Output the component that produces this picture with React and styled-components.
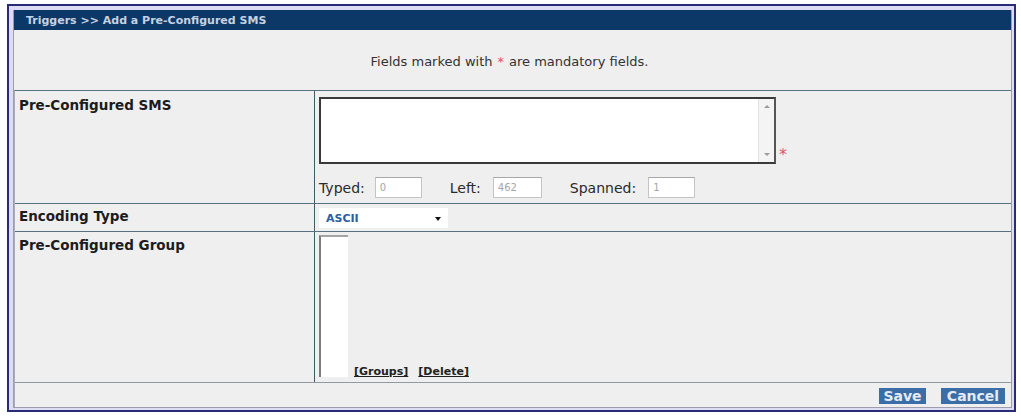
import React from "react";
import styled, { createGlobalStyle } from "styled-components";

const GlobalStyle = createGlobalStyle`
    body {
        margin: 0;
        background: #fff;
        font-family: "DejaVu Sans", Verdana, sans-serif;
    }
`;

const Frame = styled.section`
    width: 1009px;
    height: 408px;
    margin: 4px 0 0 7px;
    box-sizing: border-box;
    border: 2px solid #2a2a78;
    background: #dcdcf2;
    padding: 4px 2px 2px 4px;
`;

const Panel = styled.div`
    height: 100%;
    box-sizing: border-box;
    display: flex;
    flex-direction: column;
    border: 1px solid #9c9cae;
    border-top: none;
    background: #efefef;
`;

const TitleBar = styled.header`
    height: 20px;
    display: flex;
    align-items: center;
    padding-left: 12px;
    background: #0c3868;
    color: #c6d2e2;
    font-size: 11px;
    font-weight: bold;
`;

const Notice = styled.p`
    height: 60px;
    margin: 0;
    display: flex;
    align-items: center;
    justify-content: center;
    padding: 2px 6px 0 0;
    box-sizing: border-box;
    font-size: 13px;
    color: #333;
`;

const Star = styled.span`
    color: #e4506a;
    margin: 0 ${(p) => p.gap || 0}px;
`;

const Form = styled.div`
    flex: 1;
    display: flex;
    flex-direction: column;
    border-top: 1px solid #56717f;
    border-left: 1px solid #a8b0b6;
`;

const Row = styled.div`
    height: ${(p) => p.h}px;
    display: grid;
    grid-template-columns: 299px 1fr;
    border-bottom: 1px solid #56717f;
    box-sizing: border-box;
`;

const Label = styled.div`
    padding: ${(p) => p.pt || 5}px 0 0 4px;
    font-size: 13.5px;
    line-height: 16px;
    font-weight: bold;
    color: #1c1c1c;
`;

const Value = styled.div`
    border-left: 1px solid #3f5b6a;
    padding: ${(p) => p.pt || 5}px 0 0 4px;
    display: flex;
    flex-direction: ${(p) => (p.row ? "row" : "column")};
    align-items: flex-start;
`;

const SmsLine = styled.div`
    display: flex;
    align-items: flex-end;
`;

const TextBox = styled.div`
    width: 457px;
    height: 67px;
    box-sizing: border-box;
    display: flex;
    border: 2px solid #3a3a3a;
    border-right-color: #555;
    background: #fff;
`;

const Area = styled.textarea`
    flex: 1;
    border: none;
    outline: none;
    resize: none;
    background: transparent;
`;

const Track = styled.div`
    width: 15px;
    display: flex;
    flex-direction: column;
    justify-content: space-between;
    align-items: center;
    padding: 6px 0;
    background: #f4f4f4;
    border-left: 1px solid #e2e2e2;
`;

const Arrow = styled.span`
    width: 0;
    height: 0;
    border-left: 3px solid transparent;
    border-right: 3px solid transparent;
    ${(p) => (p.up ? "border-bottom" : "border-top")}: 3px solid #9a9a9a;
`;

const Counters = styled.div`
    margin-top: 13px;
    display: flex;
    align-items: center;
    font-size: 14px;
    color: #2a2a2a;
`;

const CounterLabel = styled.span`
    margin-left: ${(p) => p.ml || 0}px;
    margin-right: ${(p) => p.mr || 10}px;
`;

const Counter = styled.input`
    width: ${(p) => p.w}px;
    height: 21px;
    box-sizing: border-box;
    padding: 0 4px;
    border: 1px solid #c4c4c4;
    border-top-color: #a8a8a8;
    background: #fff;
    font-family: "DejaVu Sans", sans-serif;
    font-size: 10px;
    color: #a6a6a6;
`;

const Select = styled.div`
    width: 129px;
    height: 20px;
    box-sizing: border-box;
    display: flex;
    align-items: center;
    justify-content: space-between;
    padding: 0 7px 0 7px;
    background: #fff;
    font-size: 11px;
    font-weight: bold;
    color: #2b5e9c;
`;

const Caret = styled.span`
    width: 0;
    height: 0;
    border-left: 3px solid transparent;
    border-right: 3px solid transparent;
    border-top: 4px solid #111;
    margin-top: 2px;
`;

const ListBox = styled.div`
    width: 29px;
    height: 142px;
    box-sizing: border-box;
    background: #fff;
    border-left: 2px solid #7c7c7c;
    border-top: 2px solid #a4a4a4;
`;

const Links = styled.div`
    align-self: flex-end;
    display: flex;
    gap: 10px;
    margin: 0 0 4px 6px;
`;

const Link = styled.a`
    font-size: 11px;
    font-weight: bold;
    color: #222;
    text-decoration: underline;
`;

const Footer = styled.div`
    flex: 1;
    display: flex;
    justify-content: flex-end;
    align-items: flex-start;
    gap: 15px;
    padding: 5px 6px 0 0;
    border-top: 1px solid #909aa2;
    margin-top: -1px;
`;

const Button = styled.button`
    width: ${(p) => p.w}px;
    height: 16px;
    padding: 0;
    border: none;
    background: #3b6ea6;
    color: #e4ebf4;
    font-family: "DejaVu Sans", sans-serif;
    font-size: 14px;
    font-weight: bold;
    line-height: 16px;
`;

export default function App() {
    return (
        <>
            <GlobalStyle />
            <Frame>
                <Panel>
                    <TitleBar>Triggers &gt;&gt; Add a Pre-Configured SMS</TitleBar>
                    <Notice>
                        Fields marked with<Star gap={5}>*</Star>are mandatory fields.
                    </Notice>
                    <Form>
                        <Row h={113}>
                            <Label pt={6}>Pre-Configured SMS</Label>
                            <Value pt={6}>
                                <SmsLine>
                                    <TextBox>
                                        <Area />
                                        <Track>
                                            <Arrow up />
                                            <Arrow />
                                        </Track>
                                    </TextBox>
                                    <Star gap={3}>*</Star>
                                </SmsLine>
                                <Counters>
                                    <CounterLabel>Typed:</CounterLabel>
                                    <Counter w={47} defaultValue="0" readOnly />
                                    <CounterLabel ml={28} mr={12}>Left:</CounterLabel>
                                    <Counter w={49} defaultValue="462" readOnly />
                                    <CounterLabel ml={28} mr={12}>Spanned:</CounterLabel>
                                    <Counter w={47} defaultValue="1" readOnly />
                                </Counters>
                            </Value>
                        </Row>
                        <Row h={28}>
                            <Label pt={4}>Encoding Type</Label>
                            <Value pt={4}>
                                <Select>
                                    ASCII
                                    <Caret />
                                </Select>
                            </Value>
                        </Row>
                        <Row h={151}>
                            <Label pt={5}>Pre-Configured Group</Label>
                            <Value pt={3} row>
                                <ListBox />
                                <Links>
                                    <Link>[Groups]</Link>
                                    <Link>[Delete]</Link>
                                </Links>
                            </Value>
                        </Row>
                        <Footer>
                            <Button w={47}>Save</Button>
                            <Button w={64}>Cancel</Button>
                        </Footer>
                    </Form>
                </Panel>
            </Frame>
        </>
    );
}
